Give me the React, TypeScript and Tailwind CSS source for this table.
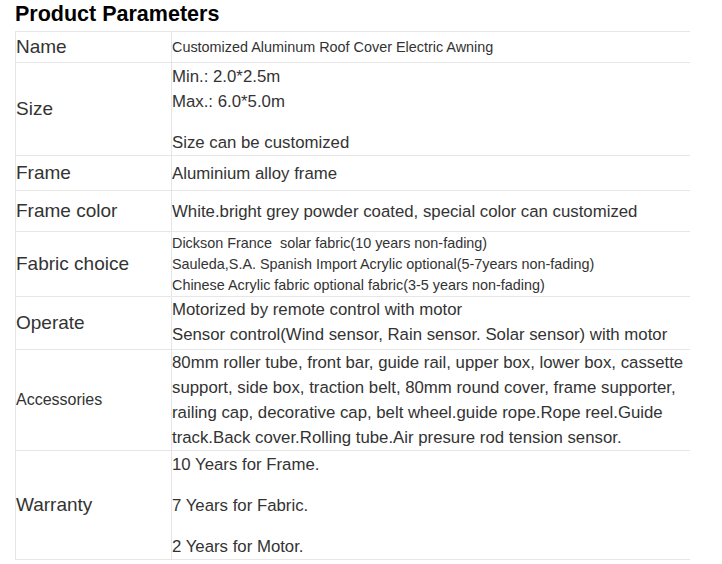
import React from "react";

const Row = ({
  label,
  labelSize = "text-[19px]",
  h,
  children,
}: {
  label: string;
  labelSize?: string;
  h: string;
  children: React.ReactNode;
}) => (
  <div className={`grid grid-cols-[156px_1fr] border-b border-[#e6e6e6] ${h}`}>
    <div className={`flex items-center border-r border-[#e6e6e6] ${labelSize} leading-[24px]`}>
      {label}
    </div>
    <div className="flex flex-col justify-center">{children}</div>
  </div>
);

export default function App() {
  const big = "text-[16.8px] leading-[25px] whitespace-nowrap";
  const small = "text-[14.4px] leading-[21px] whitespace-nowrap";
  return (
    <div className="w-[722px] h-[564px] bg-white text-[#333] font-['Liberation_Sans',Arial,sans-serif]">
      <div className="pl-[15px]">
        <h2 className="h-[31px] pt-[2px] text-[21.5px] leading-[24px] font-bold text-black">
          Product Parameters
        </h2>
        <div className="w-[675px] border-l border-t border-[#e6e6e6]">
          <Row label="Name" h="h-[31px]">
            <div className={small}>Customized Aluminum Roof Cover Electric Awning</div>
          </Row>
          <Row label="Size" h="h-[93px]">
            <div className={big}>Min.: 2.0*2.5m</div>
            <div className={big}>Max.: 6.0*5.0m</div>
            <div className="h-[16px]" />
            <div className={big}>Size can be customized</div>
          </Row>
          <Row label="Frame" h="h-[35px]">
            <div className={big}>Aluminium alloy frame</div>
          </Row>
          <Row label="Frame color" h="h-[41px]">
            <div className={big}>White.bright grey powder coated, special color can customized</div>
          </Row>
          <Row label="Fabric choice" h="h-[65px]">
            <div className={small}>Dickson France&nbsp; solar fabric(10 years non-fading)</div>
            <div className={small}>Sauleda,S.A. Spanish Import Acrylic optional(5-7years non-fading)</div>
            <div className={small}>Chinese Acrylic fabric optional fabric(3-5 years non-fading)</div>
          </Row>
          <Row label="Operate" h="h-[53px]">
            <div className={`${big} -mt-[2px]`}>Motorized by remote control with motor</div>
            <div className={big}>Sensor control(Wind sensor, Rain sensor. Solar sensor) with motor</div>
          </Row>
          <Row label="Accessories" labelSize="text-[16px]" h="h-[101px]">
            <div className={big}>80mm roller tube, front bar, guide rail, upper box, lower box, cassette</div>
            <div className={big}>support, side box, traction belt, 80mm round cover, frame supporter,</div>
            <div className={big}>railing cap, decorative cap, belt wheel.guide rope.Rope reel.Guide</div>
            <div className={big}>track.Back cover.Rolling tube.Air presure rod tension sensor.</div>
          </Row>
          <Row label="Warranty" h="h-[109px]">
            <div className="flex flex-col gap-[16px]">
              <div className={big}>10 Years for Frame.</div>
              <div className={big}>7 Years for Fabric.</div>
              <div className={big}>2 Years for Motor.</div>
            </div>
          </Row>
        </div>
      </div>
    </div>
  );
}
